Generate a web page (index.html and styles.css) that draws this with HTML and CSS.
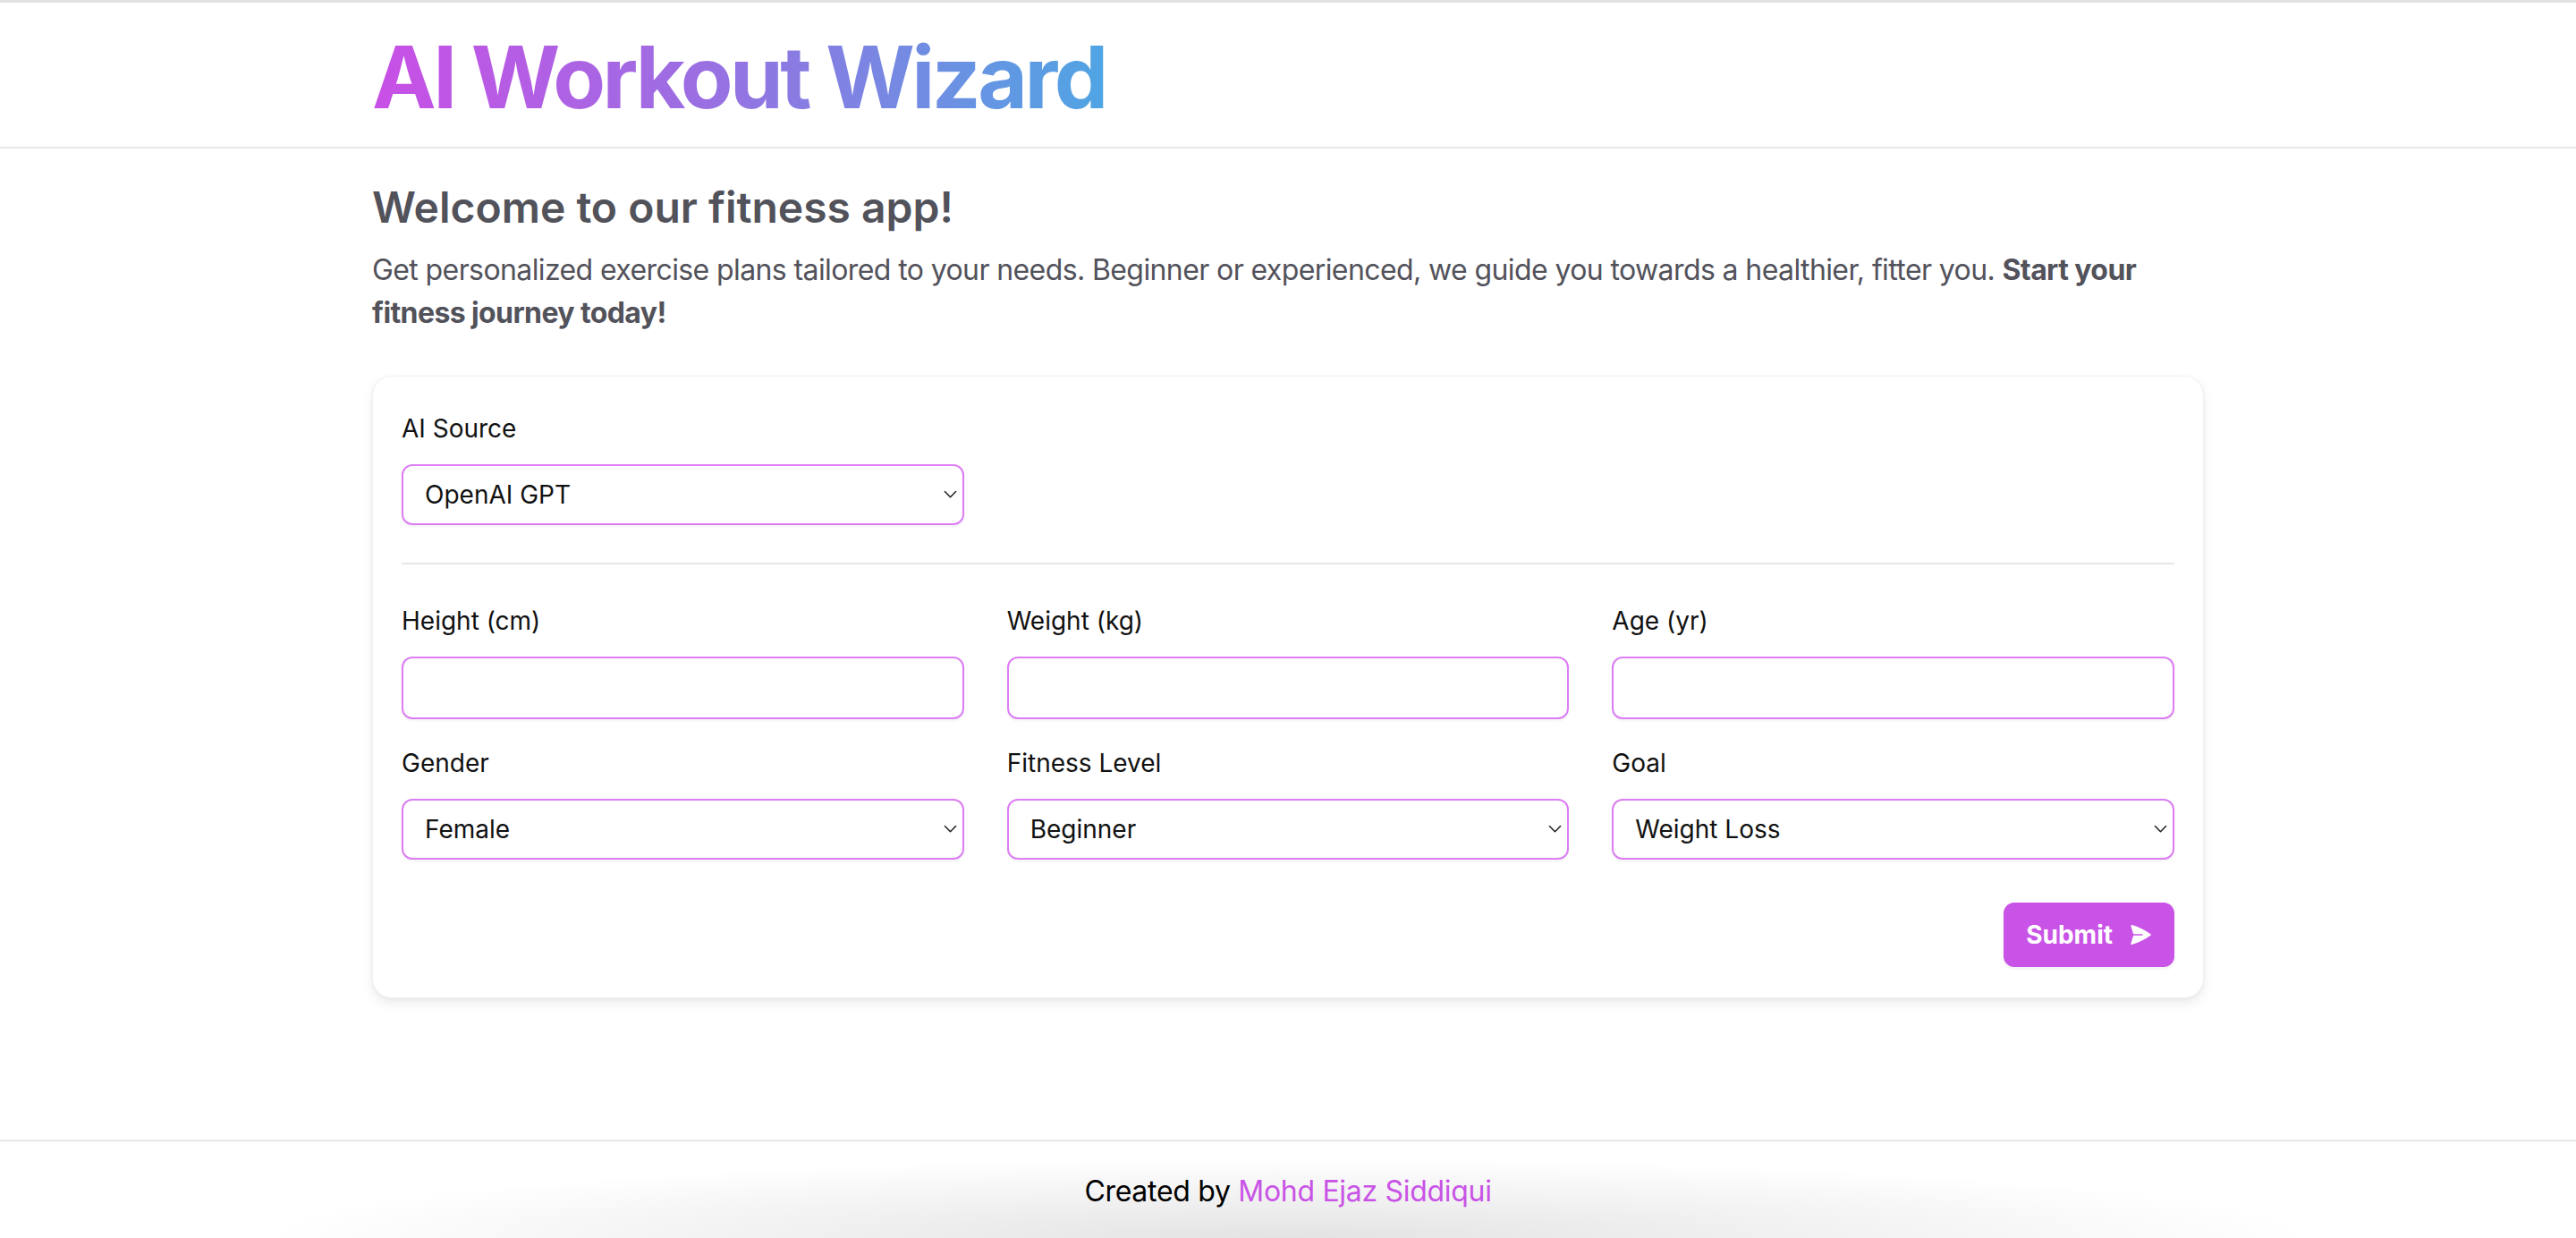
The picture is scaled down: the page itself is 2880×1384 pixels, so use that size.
FILE: index.html
```html
<!DOCTYPE html>
<html lang="en">
<head>
<meta charset="utf-8">
<title>AI Workout Wizard</title>
<link rel="stylesheet" href="styles.css">
</head>
<body>
<div class="page">
  <header class="site-header">
    <div class="container">
      <h1 class="brand">AI Workout Wizard</h1>
    </div>
  </header>

  <main class="main">
    <div class="container">
      <h2 class="welcome">Welcome to our fitness app!</h2>
      <p class="intro">Get personalized exercise plans tailored to your needs. Beginner or experienced, we guide you towards a healthier, fitter you. <strong>Start your fitness journey today!</strong></p>

      <form class="card">
        <div class="grid">
          <div class="field">
            <label class="label" for="source">AI Source</label>
            <div class="select-wrap">
              <select id="source" class="control select"><option>OpenAI GPT</option><option>Google Gemini</option></select>
              <svg class="chevron" viewBox="0 0 16 10" width="15" height="9"><path d="M1.2 1.2 L8 8 L14.8 1.2" fill="none" stroke="#1f1f1f" stroke-width="1.7" stroke-linecap="round" stroke-linejoin="round"/></svg>
            </div>
          </div>
        </div>

        <hr class="divider">

        <div class="grid grid-fields">
          <div class="field">
            <label class="label" for="height">Height (cm)</label>
            <input id="height" class="control input" type="text">
          </div>
          <div class="field">
            <label class="label" for="weight">Weight (kg)</label>
            <input id="weight" class="control input" type="text">
          </div>
          <div class="field">
            <label class="label" for="age">Age (yr)</label>
            <input id="age" class="control input" type="text">
          </div>
          <div class="field">
            <label class="label" for="gender">Gender</label>
            <div class="select-wrap">
              <select id="gender" class="control select"><option>Female</option><option>Male</option></select>
              <svg class="chevron" viewBox="0 0 16 10" width="15" height="9"><path d="M1.2 1.2 L8 8 L14.8 1.2" fill="none" stroke="#1f1f1f" stroke-width="1.7" stroke-linecap="round" stroke-linejoin="round"/></svg>
            </div>
          </div>
          <div class="field">
            <label class="label" for="level">Fitness Level</label>
            <div class="select-wrap">
              <select id="level" class="control select"><option>Beginner</option><option>Intermediate</option><option>Advanced</option></select>
              <svg class="chevron" viewBox="0 0 16 10" width="15" height="9"><path d="M1.2 1.2 L8 8 L14.8 1.2" fill="none" stroke="#1f1f1f" stroke-width="1.7" stroke-linecap="round" stroke-linejoin="round"/></svg>
            </div>
          </div>
          <div class="field">
            <label class="label" for="goal">Goal</label>
            <div class="select-wrap">
              <select id="goal" class="control select"><option>Weight Loss</option><option>Muscle Gain</option></select>
              <svg class="chevron" viewBox="0 0 16 10" width="15" height="9"><path d="M1.2 1.2 L8 8 L14.8 1.2" fill="none" stroke="#1f1f1f" stroke-width="1.7" stroke-linecap="round" stroke-linejoin="round"/></svg>
            </div>
          </div>
        </div>

        <div class="actions">
          <button type="button" class="submit">
            <span>Submit</span>
            <svg class="send" viewBox="2.4 2.3 19.9 19.4" width="23" height="22"><path fill="#ffffff" d="M3.478 2.404a.75.75 0 0 0-.926.941l2.432 7.905H13.5a.75.75 0 0 1 0 1.5H4.984l-2.432 7.905a.75.75 0 0 0 .926.94 60.519 60.519 0 0 0 18.445-8.986.75.75 0 0 0 0-1.218A60.517 60.517 0 0 0 3.478 2.404Z"/></svg>
          </button>
        </div>
      </form>
    </div>
  </main>

  <footer class="site-footer">
    <p class="credit">Created by <a class="author" href="#">Mohd Ejaz Siddiqui</a></p>
  </footer>
</div>
</body>
</html>
```

FILE: styles.css
```css
* { box-sizing: border-box; }

html, body {
  margin: 0;
  padding: 0;
  background: #ffffff;
}

body {
  font-family: Inter, "Noto Sans", "Liberation Sans", sans-serif;
  color: #111111;
}

.page {
  min-height: 100vh;
  display: flex;
  flex-direction: column;
}

.container {
  width: 2048px;
  max-width: 100%;
  margin: 0 auto;
}

/* Header */
.site-header {
  border-top: 3px solid #e2e2e4;
  border-bottom: 2px solid #e5e7eb;
  padding: 35px 0 30px;
}

.brand {
  display: inline-block;
  margin: 0;
  font-size: 96px;
  line-height: 96px;
  font-weight: 700;
  letter-spacing: -3.5px;
  background: linear-gradient(90deg, #c94fe6 0%, #9a6fe2 45%, #4fa5e3 100%);
  -webkit-background-clip: text;
  background-clip: text;
  color: transparent;
}

/* Main */
.main {
  flex: 1;
  padding-top: 34px;
}

.welcome {
  margin: 0;
  font-size: 48px;
  line-height: 64px;
  font-weight: 600;
  color: #52525b;
}

.intro {
  margin: 14px 0 0;
  font-size: 32px;
  line-height: 48px;
  letter-spacing: -0.6px;
  color: #52525b;
}

.intro strong {
  font-weight: 700;
}

/* Card */
.card {
  margin-top: 46px;
  background: #ffffff;
  border: 1px solid #f1f1f3;
  border-radius: 22px;
  padding: 38px 32px 34px;
  box-shadow: 0 6px 14px rgba(0, 0, 0, 0.07), 0 2px 4px rgba(0, 0, 0, 0.04);
}

.grid {
  display: grid;
  grid-template-columns: repeat(3, 1fr);
  column-gap: 48px;
}

.grid-fields {
  row-gap: 29px;
}

.field {
  display: flex;
  flex-direction: column;
}

.label {
  display: block;
  font-size: 28px;
  line-height: 40px;
  color: #111111;
  margin-bottom: 20px;
}

.control {
  width: 100%;
  font-family: inherit;
  font-size: 28px;
  color: #111111;
  background: #ffffff;
  border: 2px solid #dc7ef3;
  border-radius: 12px;
  padding: 0 24px;
  outline: none;
  box-shadow: 0 2px 3px rgba(0, 0, 0, 0.05);
}

.input {
  height: 70px;
}

.select-wrap {
  position: relative;
}

.select {
  height: 68px;
  -webkit-appearance: none;
  appearance: none;
  padding-right: 48px;
}

.chevron {
  position: absolute;
  right: 8px;
  top: 50%;
  transform: translateY(-50%);
  pointer-events: none;
}

.divider {
  border: 0;
  height: 2px;
  background: #e5e7eb;
  margin: 42px 0 43px;
}

.actions {
  display: flex;
  justify-content: flex-end;
  margin-top: 48px;
}

.submit {
  display: flex;
  align-items: center;
  gap: 20px;
  height: 72px;
  padding: 0 26px 0 25px;
  background: #c953e6;
  color: #ffffff;
  border: 0;
  border-radius: 12px;
  font-family: inherit;
  font-size: 28px;
  font-weight: 700;
  cursor: pointer;
  box-shadow: 0 2px 4px rgba(0, 0, 0, 0.06);
}

.send {
  display: block;
}

/* Footer */
.site-footer {
  border-top: 2px solid #e5e7eb;
  padding: 32px 0 28px;
  text-align: center;
  background: radial-gradient(ellipse 40% 90px at 50% 100%, rgba(0, 0, 0, 0.11), rgba(0, 0, 0, 0) 100%);
}

.credit {
  margin: 0;
  font-size: 32px;
  line-height: 48px;
  letter-spacing: -0.3px;
  color: #000000;
}

.author {
  color: #c953e6;
  text-decoration: none;
}
```
